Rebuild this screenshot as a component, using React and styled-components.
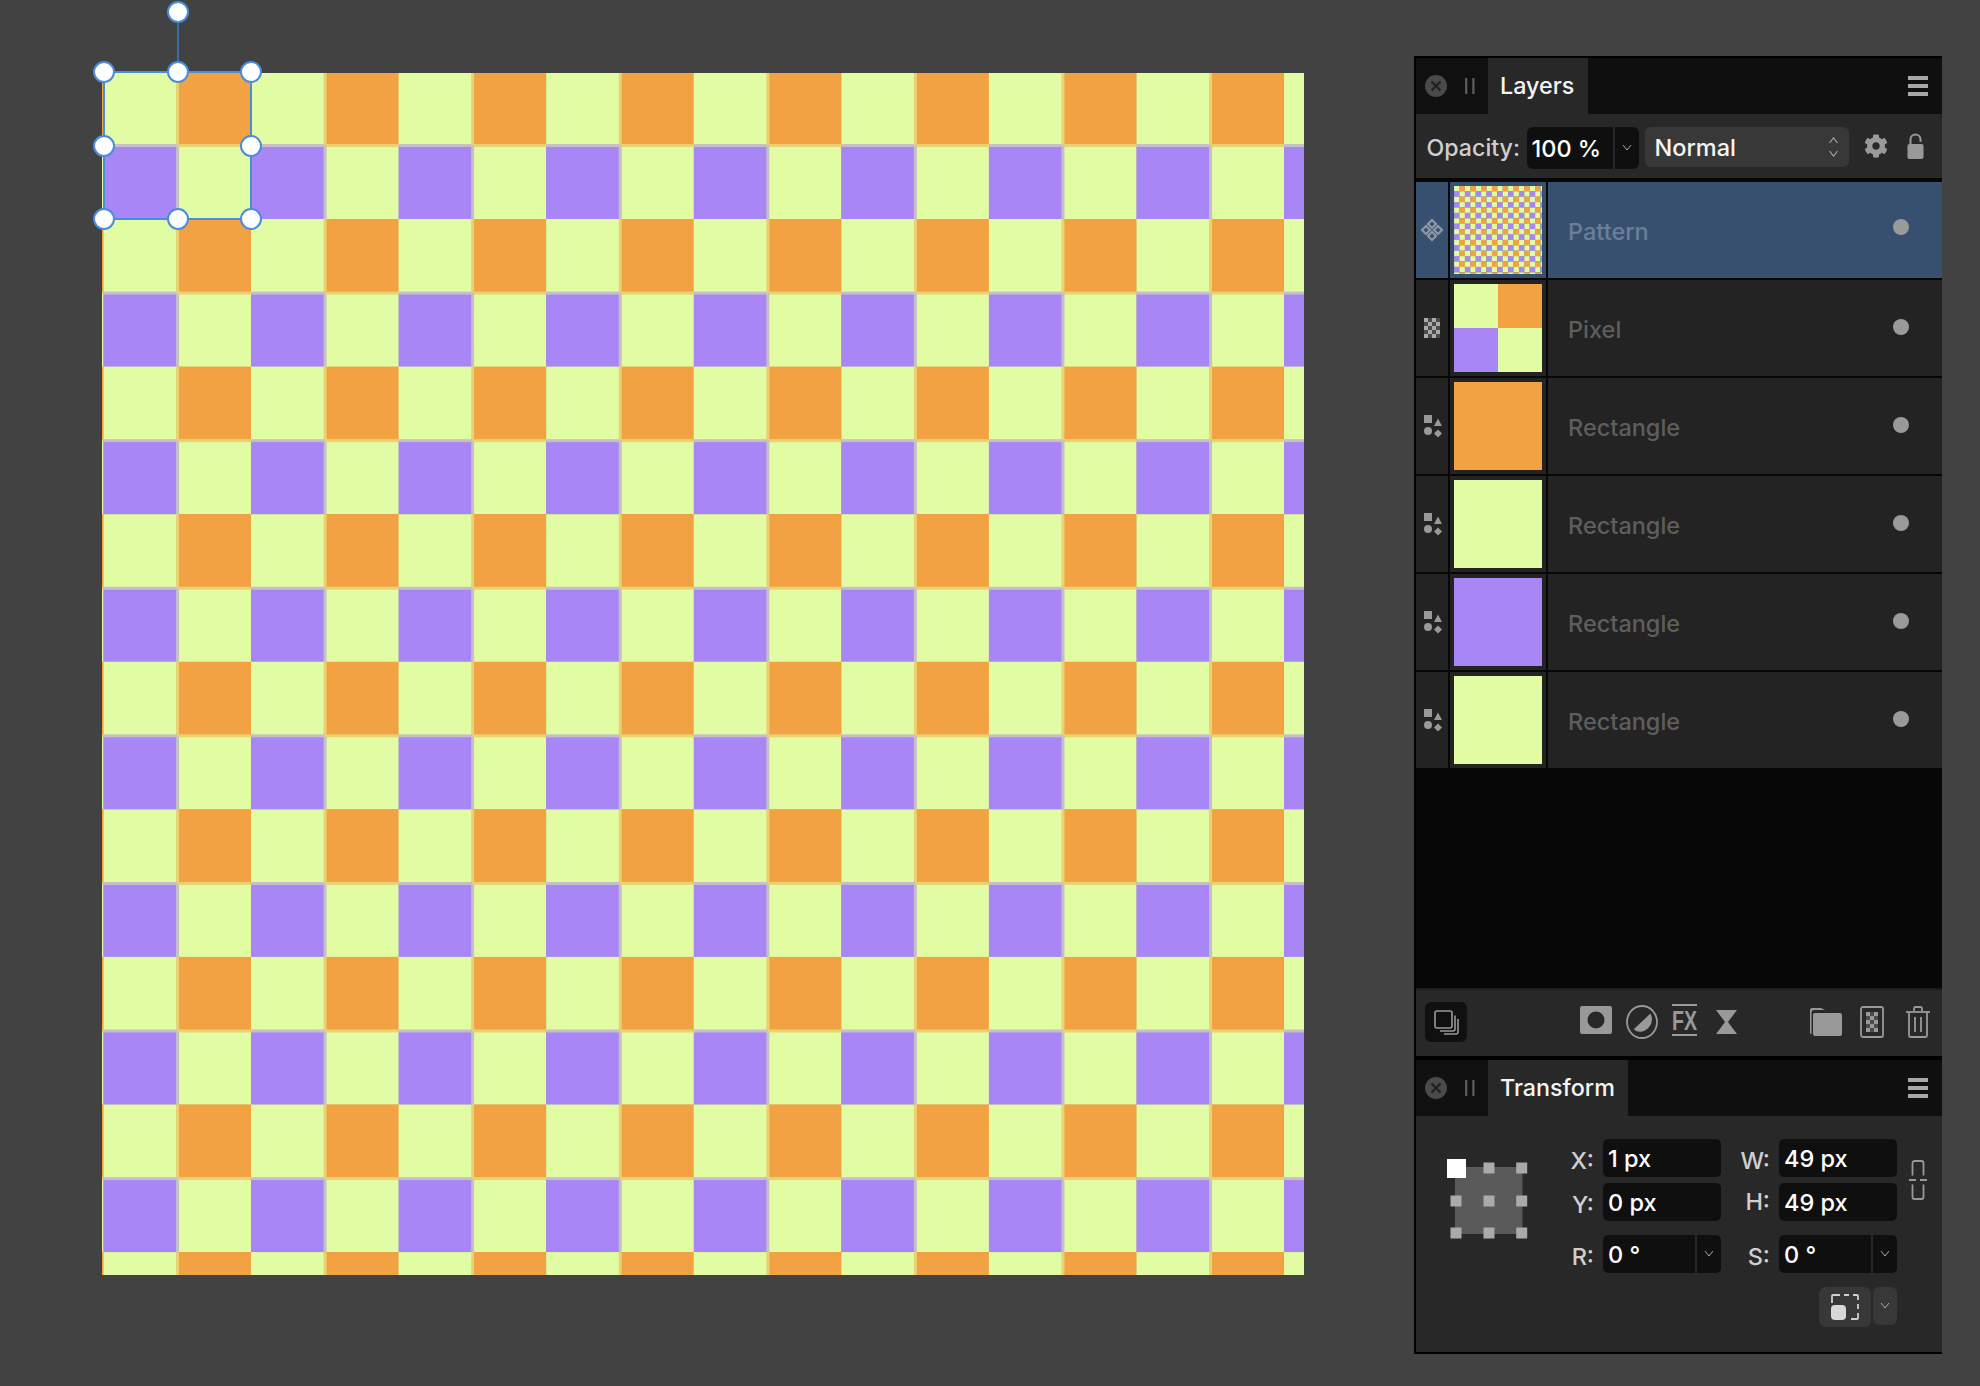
import React from 'react';
import styled, { createGlobalStyle } from 'styled-components';
import { FaCog } from 'react-icons/fa';

const YELLOW = '#e2fca3';
const ORANGE = '#f3a243';
const PURPLE = '#a886f5';
const TAN = '#e9d274';
const GREY = '#c6bfc9';
const ICON = '#999999';

const GlobalStyle = createGlobalStyle`
  html, body { margin: 0; padding: 0; background: #424242; overflow: hidden; }
  * { box-sizing: border-box; }
`;

const Page = styled.div`
  width: 1980px;
  height: 1386px;
  background: #424242;
  display: flex;
  align-items: flex-start;
  font-family: Inter, "Liberation Sans", sans-serif;
  font-size: 23.5px;
  font-weight: 500;
`;

const Canvas = styled.div`
  position: relative;
  width: 1202px;
  height: 1202px;
  margin: 73px 0 0 102px;
  flex: none;
`;

const ArtSvg = styled.svg`
  display: block;
  width: 100%;
  height: 100%;
`;

const Selection = styled.div`
  position: absolute;
  left: 1px;
  top: -2px;
  width: 149px;
  height: 149px;
  border: 2px solid #4a8cdf;
`;

const RotationStem = styled.div`
  position: absolute;
  left: 72px;
  top: -61px;
  width: 2px;
  height: 60px;
  background: #3d6ca8;
`;

const Handle = styled.span`
  position: absolute;
  left: ${p => p.$x}px;
  top: ${p => p.$y}px;
  width: 22px;
  height: 22px;
  margin: -11px 0 0 -11px;
  border-radius: 50%;
  background: #ffffff;
  border: 2px solid #4a8cdf;
`;

const Panel = styled.aside`
  width: 528px;
  height: 1298px;
  margin: 56px 0 0 110px;
  flex: none;
  display: flex;
  flex-direction: column;
  background: #070707;
  border-top: 2px solid #000;
  border-bottom: 2px solid #000;
  border-left: 2px solid #000;
`;

const Header = styled.header`
  height: 56px;
  flex: none;
  display: flex;
  align-items: stretch;
  background: #0f0f0f;
`;

const HeaderControls = styled.div`
  width: 72px;
  flex: none;
  display: flex;
  align-items: center;
  gap: 18px;
  padding-left: 9px;
  background: #101010;
`;

const Tab = styled.div`
  display: flex;
  align-items: center;
  padding: 0 13px 2px 12px;
  min-width: ${p => p.$min}px;
  background: #282828;
  color: #f4f4f4;
  font-size: 23.3px;
`;

const MenuButton = styled.div`
  margin-left: auto;
  margin-right: 14px;
  display: flex;
  align-items: center;
`;

const Options = styled.div`
  height: 64px;
  flex: none;
  background: #282828;
  display: flex;
  align-items: flex-start;
  padding: 13px 0 0 10.5px;
`;

const OptionLabel = styled.span`
  width: 100px;
  height: 42px;
  flex: none;
  line-height: 42px;
  color: #cfcfcf;
  font-size: 23.2px;
`;

const DarkBox = styled.div`
  height: ${p => p.$h || 42}px;
  width: ${p => p.$w}px;
  flex: none;
  background: #0f0f0f;
  color: #ffffff;
  display: flex;
  align-items: center;
  padding-left: 5px;
  border-radius: ${p => p.$radius || '5px'};
  margin-left: ${p => p.$ml || 0}px;
`;

const Caret = styled(DarkBox)`
  padding: 0 0 2px;
  justify-content: center;
`;

const Select = styled.div`
  width: 204px;
  height: 40px;
  margin-left: 6px;
  flex: none;
  background: #383838;
  border-radius: 6px;
  color: #f4f4f4;
  display: flex;
  align-items: center;
  justify-content: space-between;
  padding: 0 10px;
`;

const GearSlot = styled.span`
  margin: 7px 0 0 15px;
  width: 24px;
  height: 24px;
  flex: none;
  color: ${ICON};
  font-size: 24px;
  line-height: 0;
`;

const LockSlot = styled.span`
  margin: 6px 0 0 19px;
  line-height: 0;
  flex: none;
`;

const List = styled.div`
  flex: 1;
  display: flex;
  flex-direction: column;
  gap: 2px;
  padding-top: 4px;
  min-height: 0;
`;

const Row = styled.div`
  height: 96px;
  flex: none;
  display: grid;
  grid-template-columns: 32px 96px 1fr;
  gap: 2px;
`;

const RowCell = styled.div`
  background: ${p => p.$selected ? '#38506f' : '#232323'};
  display: flex;
  align-items: center;
  justify-content: center;
`;

const Thumb = styled.div`
  width: 88px;
  height: 88px;
  overflow: hidden;
  background: ${p => p.$color || 'transparent'};
`;

const QuadGrid = styled.div`
  width: 88px;
  height: 88px;
  display: grid;
  grid-template: 1fr 1fr / 1fr 1fr;
`;

const Quad = styled.span`
  background: ${p => p.$color};
`;

const NameCell = styled(RowCell)`
  justify-content: space-between;
  padding: 0 33px 0 20px;
`;

const LayerName = styled.span`
  margin-top: 2px;
  color: ${p => p.$selected ? '#6b7f98' : '#5e5e5e'};
  font-size: 23.5px;
`;

const VisibilityDot = styled.span`
  width: 16px;
  height: 16px;
  border-radius: 50%;
  background: #9a9a9a;
  margin-bottom: ${p => p.$selected ? 6 : 2}px;
`;

const Footer = styled.div`
  height: 68px;
  flex: none;
  background: #282828;
  border-top: 2px solid #1c1c1c;
  display: flex;
  align-items: flex-start;
  padding: 12px 0 0 9px;
`;

const StackButton = styled.div`
  width: 42px;
  height: 40px;
  flex: none;
  background: #101010;
  border-radius: 6px;
  display: flex;
  align-items: center;
  justify-content: center;
`;

const FooterIcon = styled.span`
  flex: none;
  line-height: 0;
  margin-left: ${p => p.$ml}px;
  margin-top: ${p => p.$mt}px;
`;

const ShapesSlot = styled.span`
  line-height: 0;
  margin-left: 1px;
`;

const PanelGap = styled.div`
  height: 4px;
  flex: none;
  background: #000;
`;

const TransformBody = styled.div`
  height: 236px;
  flex: none;
  background: #282828;
  display: flex;
  align-items: flex-start;
  padding: 23px 0 0 31px;
`;

const Anchor = styled.svg`
  width: 81px;
  height: 82px;
  margin: 20px 11px 0 0;
  flex: none;
`;

const Fields = styled.div`
  width: 358px;
  flex: none;
  display: flex;
  flex-direction: column;
`;

const FieldGrid = styled.div`
  display: grid;
  grid-template-columns: 64px 118px 58px 118px;
  grid-auto-rows: 38px;
  row-gap: 6px;
  margin-top: ${p => p.$mt || 0}px;
`;

const FieldLabel = styled.span`
  text-align: right;
  padding-right: 9px;
  color: #cfcfcf;
  line-height: 38px;
  position: relative;
  top: ${p => p.$nudge || 0}px;
`;

const FieldBox = styled.div`
  background: #0f0f0f;
  color: #ffffff;
  border-radius: 5px;
  padding-left: 5px;
  display: flex;
  align-items: center;
`;

const SplitField = styled.div`
  display: grid;
  grid-template-columns: 92px 24px;
  gap: 2px;
`;

const SplitValue = styled(FieldBox)`
  border-radius: 5px 0 0 5px;
`;

const SplitCaret = styled(FieldBox)`
  border-radius: 0 5px 5px 0;
  padding: 0 0 2px;
  justify-content: center;
`;

const ScaleRow = styled.div`
  display: flex;
  justify-content: flex-end;
  align-items: flex-start;
  gap: 2px;
  margin-top: 14px;
`;

const ScaleButton = styled.div`
  width: 52px;
  height: 40px;
  background: #383838;
  border-radius: 7px;
  display: flex;
  align-items: center;
  justify-content: center;
`;

const ScaleCaret = styled.div`
  width: 24px;
  height: 38px;
  background: #383838;
  border-radius: 6px;
  display: flex;
  align-items: center;
  justify-content: center;
  padding-bottom: 2px;
`;

const LinkSlot = styled.span`
  margin: 21px 0 0 12px;
  line-height: 0;
  flex: none;
`;

/* ---------- drawings ---------- */

const CELL = 73.79;
const TILE_X = 1.4;
const TILE_Y = -1.57;

function PatternArt() {
  const rects = [];
  for (let r = -1; r < 18; r++) {
    for (let c = -1; c < 18; c++) {
      const oddR = ((r % 2) + 2) % 2 === 1;
      const oddC = ((c % 2) + 2) % 2 === 1;
      const fill = oddR === oddC ? YELLOW : oddC ? ORANGE : PURPLE;
      rects.push(<rect key={`${r}-${c}`} x={TILE_X + c * CELL} y={TILE_Y + r * CELL} width={CELL + 0.4} height={CELL + 0.4} fill={fill} />);
    }
  }
  const seams = [];
  for (let t = -1; t < 9; t++) {
    const sx = TILE_X + (2 * t + 1) * CELL - 1.2;
    const sy = TILE_Y + (2 * t + 1) * CELL - 1.2;
    for (let u = -1; u < 9; u++) {
      const ox = TILE_X + 2 * u * CELL;
      const oy = TILE_Y + 2 * u * CELL;
      seams.push(<rect key={`va${t}-${u}`} x={sx} y={oy} width={3} height={CELL} fill={TAN} />);
      seams.push(<rect key={`vb${t}-${u}`} x={sx} y={oy + CELL} width={3} height={CELL} fill={GREY} />);
      seams.push(<rect key={`ha${t}-${u}`} x={ox} y={sy} width={CELL} height={3} fill={GREY} />);
      seams.push(<rect key={`hb${t}-${u}`} x={ox + CELL} y={sy} width={CELL} height={3} fill={TAN} />);
    }
  }
  return (
    <ArtSvg viewBox="0 0 1202 1202" preserveAspectRatio="none">
      {rects}
      {seams}
    </ArtSvg>
  );
}

const Chevron = ({ color = '#a8a8a8' }) => (
  <svg width="10" height="7" viewBox="0 0 10 7" fill="none">
    <path d="M1 1 5 6 9 1" stroke={color} strokeWidth="1" />
  </svg>
);

const CloseIcon = () => (
  <svg width="22" height="22" viewBox="0 0 22 22">
    <circle cx="11" cy="11" r="11" fill="#4a4a4a" />
    <path d="M6.5 6.5 15.5 15.5M15.5 6.5 6.5 15.5" stroke="#222" strokeWidth="2.4" />
  </svg>
);

const GripIcon = () => (
  <svg width="10" height="16" viewBox="0 0 10 16">
    <path d="M1.2 0V16M8.4 0V16" stroke="#5e5e5e" strokeWidth="2.2" />
  </svg>
);

const MenuIcon = () => (
  <svg width="20" height="20" viewBox="0 0 20 20" fill="#a8a8a8">
    <rect width="20" height="4" />
    <rect y="8" width="20" height="4" />
    <rect y="16" width="20" height="4" />
  </svg>
);

const LockIcon = () => (
  <svg width="17" height="26" viewBox="0 0 17 26">
    <path d="M3.5 12V6.5a5 5 0 0 1 10 0V9" fill="none" stroke={ICON} strokeWidth="2" />
    <rect x="0.5" y="11" width="16" height="15" rx="2" fill={ICON} />
  </svg>
);

const DiamondsIcon = () => (
  <svg width="24" height="24" viewBox="0 0 24 24" fill="none" stroke="#8f98a6" strokeWidth="2.2">
    <path d="M12 2 16 6 12 10 8 6Z" />
    <path d="M12 14 16 18 12 22 8 18Z" />
    <path d="M6 8 10 12 6 16 2 12Z" />
    <path d="M18 8 22 12 18 16 14 12Z" />
  </svg>
);

const CheckerIcon = () => {
  const cells = [];
  for (let r = 0; r < 5; r++) {
    for (let c = 0; c < 4; c++) {
      cells.push(<rect key={`${r}${c}`} x={c * 4} y={r * 4} width="4" height="4" fill={(r + c) % 2 === 0 ? '#aaaaaa' : '#4c4c4c'} shapeRendering="crispEdges" />);
    }
  }
  return <svg width="16" height="20" viewBox="0 0 16 20">{cells}</svg>;
};

const ShapesIcon = () => (
  <ShapesSlot>
    <svg width="18" height="23" viewBox="0 0 18 23" fill={ICON}>
      <rect x="0" y="0" width="8" height="8" />
      <path d="M14 3.5 18 11H10Z" />
      <circle cx="4" cy="16" r="4" />
      <path d="M14 14.5 18 18.5 14 22.5 10 18.5Z" />
    </svg>
  </ShapesSlot>
);

const StackIcon = () => (
  <svg width="25" height="25" viewBox="0 0 25 25" fill="none" stroke={ICON} strokeWidth="1.6">
    <rect x="1" y="1" width="17" height="17" rx="2" />
    <path d="M21 5.5V19a2 2 0 0 1-2 2H6" />
    <path d="M24 9V22a2 2 0 0 1-2 2H10" />
  </svg>
);

const MaskIcon = () => (
  <svg width="32" height="28" viewBox="0 0 32 28">
    <path fillRule="evenodd" fill={ICON} d="M2 0H30a2 2 0 0 1 2 2V26a2 2 0 0 1-2 2H2a2 2 0 0 1-2-2V2a2 2 0 0 1 2-2ZM16 5.5a8.5 8.5 0 1 0 0 17 8.5 8.5 0 0 0 0-17Z" />
  </svg>
);

const AdjustIcon = () => (
  <svg width="32" height="34" viewBox="0 0 32 34">
    <ellipse cx="16" cy="17" rx="15" ry="16" fill="none" stroke={ICON} strokeWidth="1.8" />
    <path d="M24.5 8.5A12 12.5 0 0 1 10 26Q8.5 25 8 24Z" fill={ICON} />
  </svg>
);

const FxIcon = () => (
  <svg width="26" height="32" viewBox="0 0 26 32" overflow="visible">
    <rect x="0" y="0" width="25" height="2" fill={ICON} />
    <rect x="0" y="30" width="25" height="2" fill={ICON} />
    <text x="0" y="26" fontFamily="Liberation Sans, sans-serif" fontWeight="700" fontSize="27" textLength="25" lengthAdjust="spacingAndGlyphs" fill={ICON}>FX</text>
  </svg>
);

const HourglassIcon = () => (
  <svg width="21" height="24" viewBox="0 0 21 24">
    <path d="M0 0H21L12 12 21 24H0L9 12Z" fill={ICON} />
  </svg>
);

const FolderIcon = () => (
  <svg width="32" height="28" viewBox="0 0 32 28" fill={ICON}>
    <path d="M2 0H11L15 2H4Q1.5 2 1.5 5V26H1a1 1 0 0 1-1-1V2a2 2 0 0 1 2-2Z" />
    <path d="M5 5H30a2 2 0 0 1 2 2V26a2 2 0 0 1-2 2H5a2 2 0 0 1-2-2V7a2 2 0 0 1 2-2Z" />
  </svg>
);

const PixelLayerIcon = () => {
  const cells = [];
  for (let r = 0; r < 5; r++) {
    for (let c = 0; c < 3; c++) {
      const lit = (r + c) % 2 === 0;
      cells.push(<rect key={`${r}${c}`} x={6 + c * 4} y={6 + r * 4} width="4" height="4" fill={lit ? ICON : '#4c4c4c'} shapeRendering="crispEdges" />);
    }
  }
  return (
    <svg width="24" height="32" viewBox="0 0 24 32">
      <rect x="1" y="1" width="22" height="30" rx="2" fill="none" stroke={ICON} strokeWidth="1.8" />
      {cells}
    </svg>
  );
};

const TrashIcon = () => (
  <svg width="24" height="32" viewBox="0 0 24 32" fill="none" stroke={ICON} strokeWidth="1.8">
    <path d="M0 6H24" />
    <path d="M8 5V2.5A1.5 1.5 0 0 1 9.5 1H14.5A1.5 1.5 0 0 1 16 2.5V5" />
    <path d="M3 6V29a2 2 0 0 0 2 2H19a2 2 0 0 0 2-2V6" />
    <path d="M9 11V26M15 11V26" />
  </svg>
);

const AnchorArt = () => {
  const xs = [9, 42, 74.7];
  const ys = [9, 42, 74];
  const dots = [];
  xs.forEach((x, i) => ys.forEach((y, j) => {
    if (i === 0 && j === 0) return;
    dots.push(<rect key={`${i}${j}`} x={x - 5.5} y={y - 5.5} width="11" height="11" fill="#aaaaaa" />);
  }));
  return (
    <Anchor viewBox="0 0 81 82">
      <rect x="8" y="8" width="67.5" height="67" fill="#5a5a5a" />
      {dots}
      <rect x="0" y="0" width="19" height="19" fill="#ffffff" />
    </Anchor>
  );
};

const LinkIcon = () => (
  <svg width="18" height="40" viewBox="0 0 18 40" fill="none" stroke="#999" strokeWidth="1.8">
    <path d="M3.5 15.5V3a2 2 0 0 1 2-2H12.5a2 2 0 0 1 2 2V15.5" />
    <path d="M3.5 24.5V37a2 2 0 0 0 2 2H12.5a2 2 0 0 0 2-2V24.5" />
    <path d="M0 20H7M11 20H18" />
  </svg>
);

const ScaleIcon = () => (
  <svg width="28" height="26" viewBox="0 0 28 26">
    <path d="M1 9V2a1 1 0 0 1 1-1H9M13 1H18M22 1H26a1 1 0 0 1 1 1V6M27 10V15M27 19V24a1 1 0 0 1-1 1H20" fill="none" stroke="#cfcfcf" strokeWidth="1.8" />
    <rect x="0" y="11" width="15" height="15" rx="4" fill="#d8d8d8" />
  </svg>
);

/* ---------- data ---------- */

const HANDLES = [
  [0, 0], [73.5, 0], [147, 0],
  [0, 73.5], [147, 73.5],
  [0, 147], [73.5, 147], [147, 147],
  [73.5, -60],
];

const LAYERS = [
  { name: 'Pattern', icon: <DiamondsIcon />, selected: true, thumb: <PatternArt /> },
  { name: 'Pixel', icon: <CheckerIcon />, thumb: (
    <QuadGrid>
      <Quad $color={YELLOW} /><Quad $color={ORANGE} /><Quad $color={PURPLE} /><Quad $color={YELLOW} />
    </QuadGrid>
  ) },
  { name: 'Rectangle', icon: <ShapesIcon />, color: ORANGE },
  { name: 'Rectangle', icon: <ShapesIcon />, color: YELLOW },
  { name: 'Rectangle', icon: <ShapesIcon />, color: PURPLE },
  { name: 'Rectangle', icon: <ShapesIcon />, color: YELLOW },
];

const PanelHeader = ({ title, min }) => (
  <Header>
    <HeaderControls>
      <CloseIcon />
      <GripIcon />
    </HeaderControls>
    <Tab $min={min}>{title}</Tab>
    <MenuButton><MenuIcon /></MenuButton>
  </Header>
);

export default function App() {
  return (
    <Page>
      <GlobalStyle />
      <Canvas>
        <PatternArt />
        <Selection>
          <RotationStem />
          {HANDLES.map(([x, y]) => <Handle key={`${x}/${y}`} $x={x - 1} $y={y - 1} />)}
        </Selection>
      </Canvas>

      <Panel>
        <PanelHeader title="Layers" min={100} />
        <Options>
          <OptionLabel>Opacity:</OptionLabel>
          <DarkBox $w={86} $radius="6px 0 0 6px">100 %</DarkBox>
          <Caret $w={24} $ml={2} $radius="0 6px 6px 0"><Chevron /></Caret>
          <Select>
            Normal
            <svg width="11" height="22" viewBox="0 0 11 22" fill="none" stroke="#aaa" strokeWidth="1.1">
              <path d="M1.5 7 5.5 2 9.5 7" />
              <path d="M1.5 15 5.5 20 9.5 15" />
            </svg>
          </Select>
          <GearSlot><FaCog /></GearSlot>
          <LockSlot><LockIcon /></LockSlot>
        </Options>

        <List>
          {LAYERS.map((layer, i) => (
            <Row key={i}>
              <RowCell $selected={layer.selected}>{layer.icon}</RowCell>
              <RowCell $selected={layer.selected}>
                <Thumb $color={layer.color}>{layer.thumb}</Thumb>
              </RowCell>
              <NameCell $selected={layer.selected}>
                <LayerName $selected={layer.selected}>{layer.name}</LayerName>
                <VisibilityDot $selected={layer.selected} />
              </NameCell>
            </Row>
          ))}
        </List>

        <Footer>
          <StackButton><StackIcon /></StackButton>
          <FooterIcon $ml={113} $mt={4}><MaskIcon /></FooterIcon>
          <FooterIcon $ml={14} $mt={3}><AdjustIcon /></FooterIcon>
          <FooterIcon $ml={14} $mt={2}><FxIcon /></FooterIcon>
          <FooterIcon $ml={18} $mt={8}><HourglassIcon /></FooterIcon>
          <FooterIcon $ml={73} $mt={6}><FolderIcon /></FooterIcon>
          <FooterIcon $ml={18} $mt={4}><PixelLayerIcon /></FooterIcon>
          <FooterIcon $ml={22} $mt={4}><TrashIcon /></FooterIcon>
        </Footer>

        <PanelGap />

        <PanelHeader title="Transform" min={139} />
        <TransformBody>
          <AnchorArt />
          <Fields>
            <FieldGrid>
              <FieldLabel $nudge={3}>X:</FieldLabel>
              <FieldBox>1 px</FieldBox>
              <FieldLabel $nudge={3}>W:</FieldLabel>
              <FieldBox>49 px</FieldBox>
              <FieldLabel $nudge={3}>Y:</FieldLabel>
              <FieldBox>0 px</FieldBox>
              <FieldLabel>H:</FieldLabel>
              <FieldBox>49 px</FieldBox>
            </FieldGrid>
            <FieldGrid $mt={14}>
              <FieldLabel $nudge={3}>R:</FieldLabel>
              <SplitField>
                <SplitValue>0 °</SplitValue>
                <SplitCaret><Chevron /></SplitCaret>
              </SplitField>
              <FieldLabel $nudge={3}>S:</FieldLabel>
              <SplitField>
                <SplitValue>0 °</SplitValue>
                <SplitCaret><Chevron /></SplitCaret>
              </SplitField>
            </FieldGrid>
            <ScaleRow>
              <ScaleButton><ScaleIcon /></ScaleButton>
              <ScaleCaret><Chevron /></ScaleCaret>
            </ScaleRow>
          </Fields>
          <LinkSlot><LinkIcon /></LinkSlot>
        </TransformBody>
      </Panel>
    </Page>
  );
}
